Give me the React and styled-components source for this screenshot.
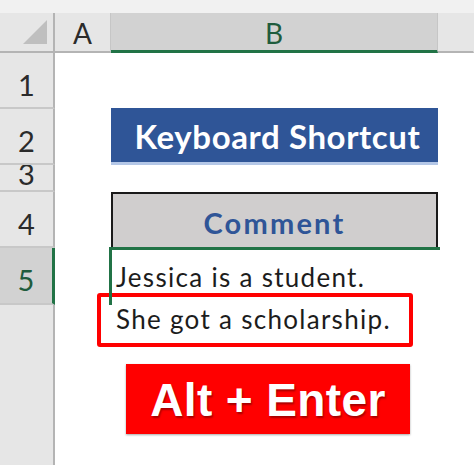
import React from 'react'
import styled, { createGlobalStyle } from 'styled-components'

const GlobalStyle = createGlobalStyle`
  html, body {
    margin: 0;
    padding: 0;
    background: #ffffff;
  }
`

const colors = {
  header: '#e6e6e6',
  headerSelected: '#d2d2d2',
  gridLine: '#b4b4b4',
  green: '#217346',
  blue: '#2f5597',
  red: '#ff0000',
}

const Sheet = styled.div`
  position: relative;
  width: 474px;
  height: 465px;
  overflow: hidden;
  display: grid;
  grid-template-columns: 55px 56px 327px 1fr;
  grid-template-rows: 13px 40px 56px 56px 27px 56px 57px 1fr;
  font-family: Lato, 'Open Sans', sans-serif;
  background: #fff;
`

const TopStrip = styled.div`
  grid-column: 1 / -1;
  background: #f1f1f1;
`

const Corner = styled.div`
  background: ${colors.header};
  border-right: 2px solid ${colors.gridLine};
  border-bottom: 2px solid ${colors.gridLine};
  display: flex;
  align-items: flex-end;
  justify-content: flex-end;
  padding: 0 6px 7px 0;
  box-sizing: border-box;
`

const Triangle = styled.div`
  width: 0;
  height: 0;
  border-left: 24px solid transparent;
  border-bottom: 24px solid #bfbfbf;
`

const ColHead = styled.div`
  background: ${p => (p.$selected ? colors.headerSelected : colors.header)};
  border-right: 1px solid ${p => (p.$last ? 'transparent' : '#c6c6c6')};
  border-bottom: ${p => (p.$selected ? `3px solid ${colors.green}` : `2px solid ${colors.gridLine}`)};
  color: ${p => (p.$selected ? '#1f5c3d' : '#2b2b2b')};
  font-size: 28px;
  display: flex;
  align-items: center;
  justify-content: center;
  box-sizing: border-box;
  padding-top: 2px;
`

const RowHead = styled.div`
  background: ${p => (p.$selected ? colors.headerSelected : colors.header)};
  border-right: ${p => (p.$selected ? `3px solid ${colors.green}` : `2px solid ${colors.gridLine}`)};
  border-bottom: ${p => (p.$open ? 'none' : '2px solid #c8c8c8')};
  color: ${p => (p.$selected ? '#1f5c3d' : '#2b2b2b')};
  font-size: 29px;
  display: flex;
  align-items: ${p => (p.$clipped ? 'flex-start' : 'center')};
  justify-content: center;
  overflow: hidden;
  box-sizing: border-box;
  line-height: 1;
  padding-top: ${p => (p.$clipped ? '0' : '8px')};

  span {
    display: block;
    margin-top: ${p => (p.$clipped ? '-6px' : '0')};
  }
`

const Cell = styled.div`
  background: #fff;
`

const Banner = styled.div`
  margin-top: -1px;
  height: 59px;
  background: ${colors.blue};
  border-bottom: 5px solid #b4c7e7;
  box-sizing: border-box;
  color: #fff;
  font-weight: 700;
  font-size: 33px;
  letter-spacing: 0.6px;
  display: flex;
  align-items: center;
  justify-content: center;
  padding: 2px 0 0 6px;
`

const HeadCell = styled.div`
  background: #d0cece;
  border: 2px solid #1a1a1a;
  border-bottom: none;
  color: ${colors.blue};
  font-weight: 700;
  font-size: 29px;
  letter-spacing: 2.2px;
  display: flex;
  align-items: center;
  justify-content: center;
  box-sizing: border-box;
  padding-top: 2px;
`

const ActiveCell = styled.div`
  position: relative;
  margin: -1px -2px 0 -2px;
  border-top: 3px solid ${colors.green};
  border-left: 3px solid ${colors.green};
  padding: 6px 0 0 4px;
  color: #1c1c1c;
  font-size: 26px;
  letter-spacing: 1.3px;
  line-height: 42px;
  white-space: nowrap;
  z-index: 1;
`

const Annotation = styled.div`
  position: absolute;
  box-sizing: border-box;
`

const RedFrame = styled(Annotation)`
  left: 97px;
  top: 293px;
  width: 316px;
  height: 54px;
  border: 4px solid ${colors.red};
  border-radius: 3px;
  z-index: 0;
  background: #fff;
`

const KeyBadge = styled(Annotation)`
  left: 126px;
  top: 364px;
  width: 284px;
  height: 70px;
  background: ${colors.red};
  box-shadow: 0 1px 2px rgba(0, 0, 0, 0.35);
  color: #fff;
  font-family: 'Liberation Sans', Arial, sans-serif;
  font-weight: 700;
  font-size: 46px;
  letter-spacing: 0.4px;
  display: flex;
  align-items: center;
  justify-content: center;
  text-shadow: 1px 2px 2px rgba(0, 0, 0, 0.35);
  padding-top: 2px;
`

export default function App() {
  return (
    <>
      <GlobalStyle />
      <Sheet>
        <TopStrip />

        <Corner>
          <Triangle />
        </Corner>
        <ColHead>A</ColHead>
        <ColHead $selected>B</ColHead>
        <ColHead $last />

        <RowHead><span>1</span></RowHead>
        <Cell />
        <Cell />
        <Cell />

        <RowHead><span>2</span></RowHead>
        <Cell />
        <Banner>Keyboard Shortcut</Banner>
        <Cell />

        <RowHead $clipped><span>3</span></RowHead>
        <Cell />
        <Cell />
        <Cell />

        <RowHead><span>4</span></RowHead>
        <Cell />
        <HeadCell>Comment</HeadCell>
        <Cell />

        <RowHead $selected><span>5</span></RowHead>
        <Cell />
        <ActiveCell>
          Jessica is a student.
          <br />
          She got a scholarship.
        </ActiveCell>
        <Cell />

        <RowHead $open />
        <Cell />
        <Cell />
        <Cell />

        <RowHead $open />
        <Cell />
        <Cell />
        <Cell />

        <RedFrame />
        <KeyBadge>Alt + Enter</KeyBadge>
      </Sheet>
    </>
  )
}
